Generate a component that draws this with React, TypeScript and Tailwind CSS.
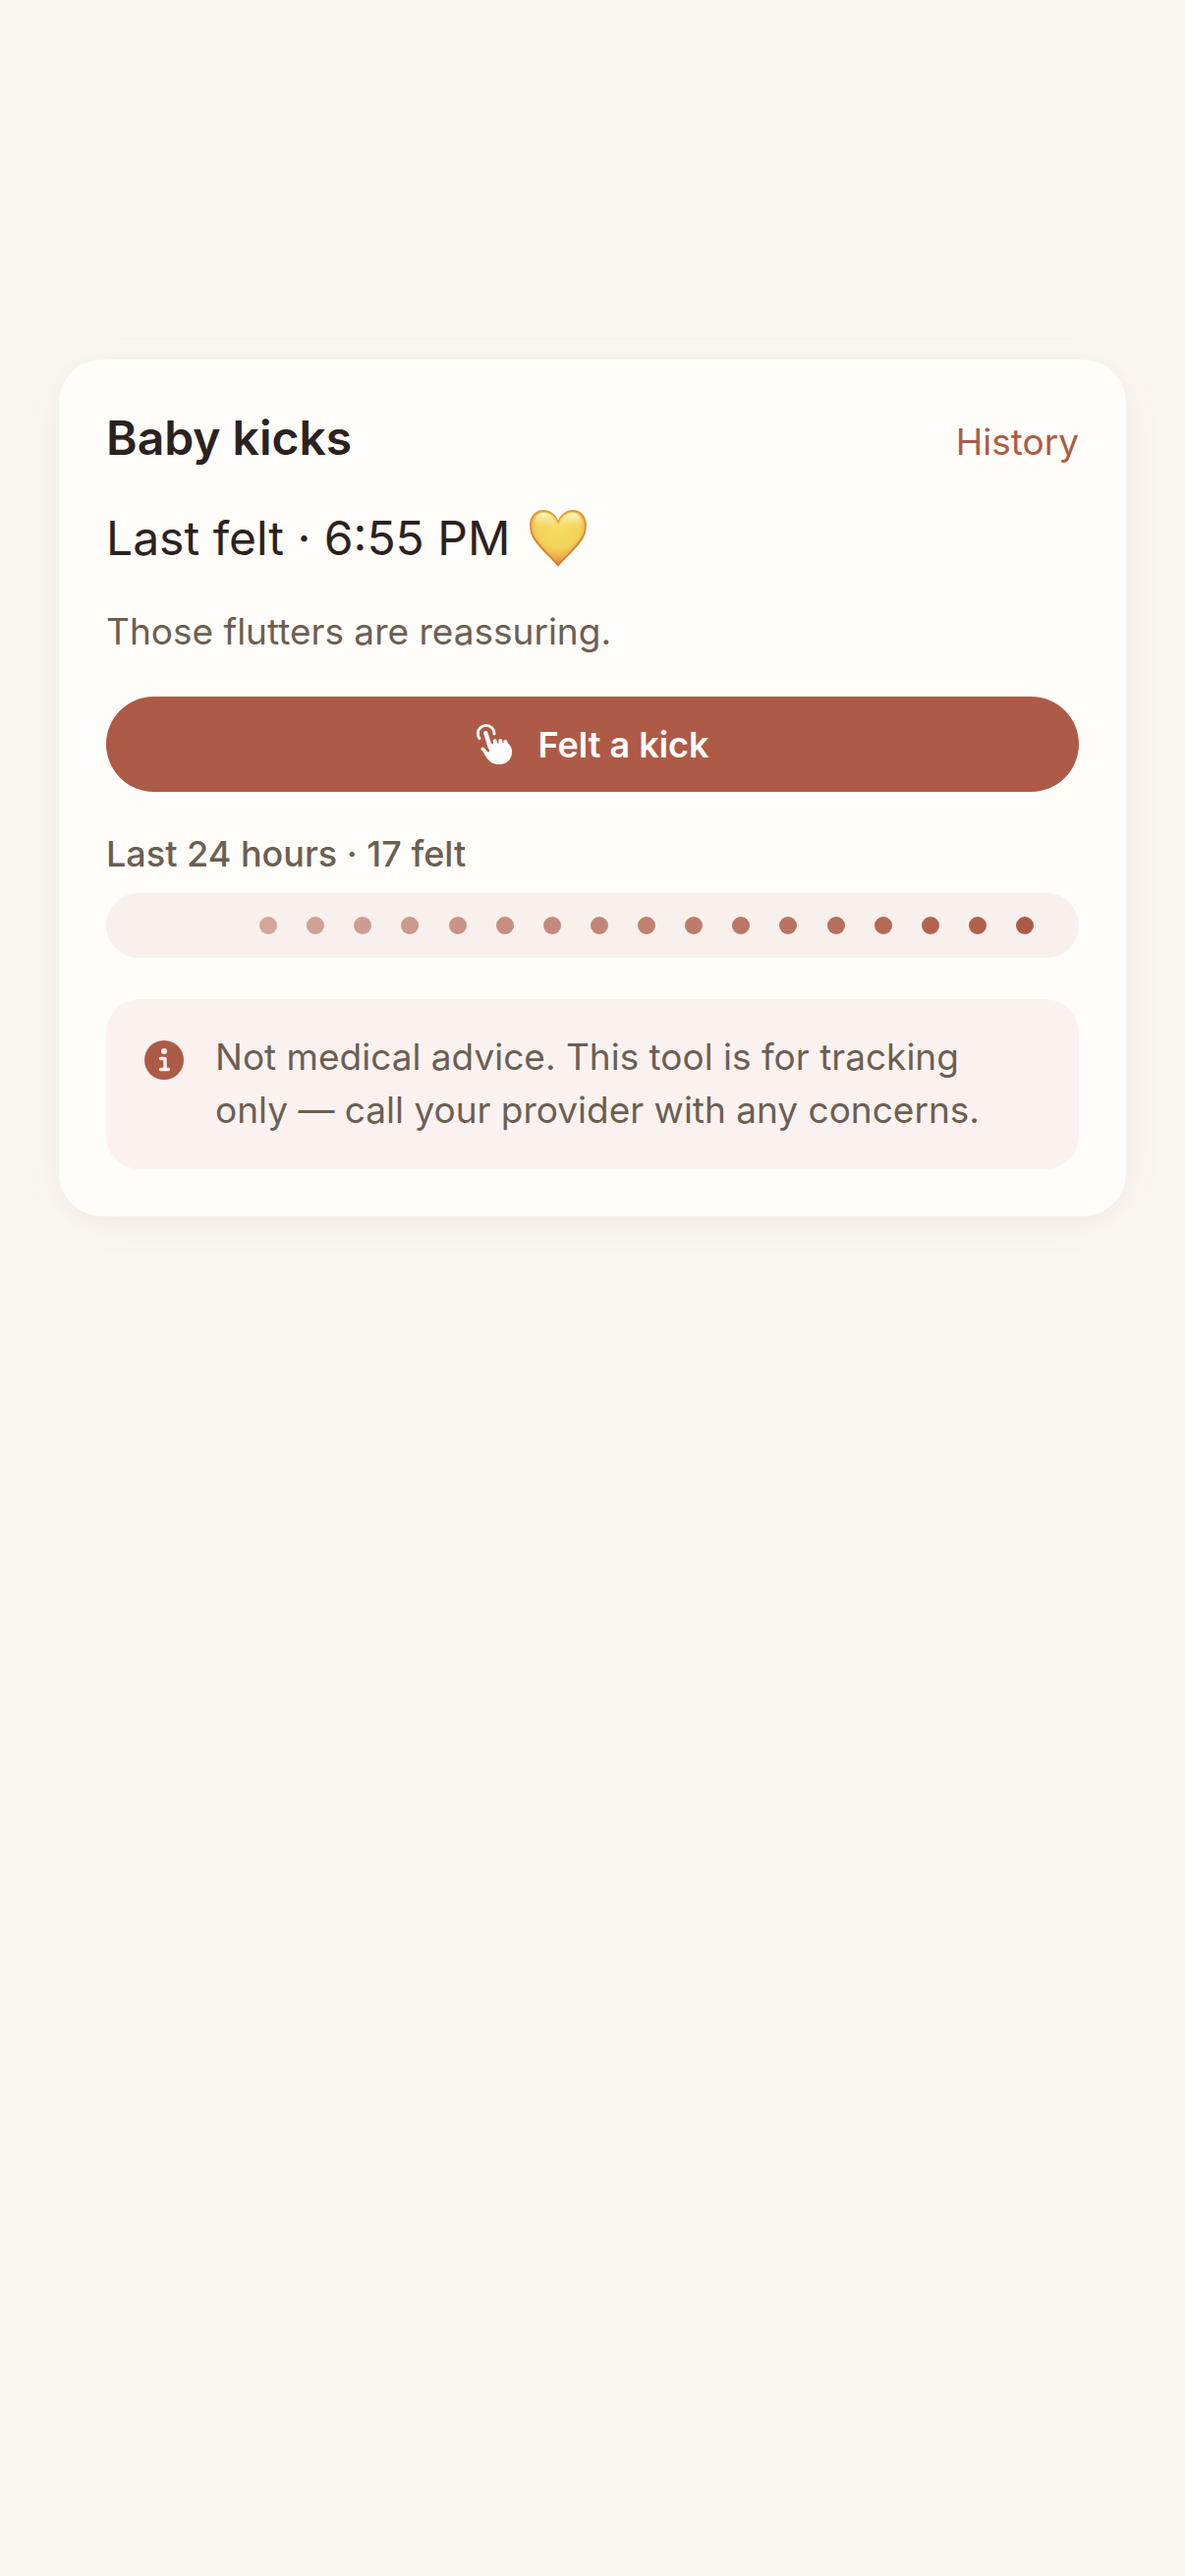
const KICK_COUNT = 17;

const kicks = Array.from({ length: KICK_COUNT }, (_, i) => ({
  id: i,
  opacity: 0.5 + (0.5 * i) / (KICK_COUNT - 1),
}));

function TapIcon() {
  return (
    <svg
      viewBox="75 105 117 135"
      className="h-[45px] w-[39px] shrink-0"
      fill="none"
      stroke="currentColor"
      strokeLinecap="round"
      strokeLinejoin="round"
      aria-hidden="true"
    >
      <path d="M87 155C83 150 82 145 82 139a25 24 0 0 1 50 0v2" strokeWidth="8.5" />
      <path d="M106 138L119 181" strokeWidth="13" />
      <path d="M97 187L116 209" strokeWidth="11" />
      <path d="M134 163L138 182M151 162L152 182M166 165L170 184" strokeWidth="12" />
      <path
        d="M112 174L126 171L172 168C183 177 187 186 186 198C185 221 169 234 147 234C129 234 117 226 108 212L100 200L118 196Z"
        fill="currentColor"
        stroke="none"
      />
    </svg>
  );
}

function YellowHeart() {
  return (
    <svg viewBox="0 0 58 58" className="size-[58px]" role="img" aria-label="Yellow heart">
      <defs>
        <linearGradient id="heart-edge" x1="0" y1="0" x2="0" y2="1">
          <stop offset="0" stopColor="#e39a3c" />
          <stop offset="1" stopColor="#d9772f" />
        </linearGradient>
        <radialGradient id="heart-fill" cx="0.5" cy="0.3" r="0.72">
          <stop offset="0" stopColor="#f5dc68" />
          <stop offset="0.55" stopColor="#f3d35a" />
          <stop offset="0.8" stopColor="#ebae48" />
          <stop offset="1" stopColor="#de8236" />
        </radialGradient>
        <linearGradient id="heart-shine" x1="0" y1="0" x2="0" y2="1">
          <stop offset="0" stopColor="#fffbe0" stopOpacity="0.9" />
          <stop offset="1" stopColor="#fbe88a" stopOpacity="0" />
        </linearGradient>
      </defs>
      <path
        d="M29 58C23 50 14 43 7 34C2 28 0 22 0 16C0 6 6 0 14 0C21 0 26 4 29 11C32 4 37 0 44 0C52 0 58 6 58 16C58 22 56 28 51 34C44 43 35 50 29 58Z"
        fill="url(#heart-edge)"
      />
      <path
        d="M29 55C23 48 15 41 9 33C4 27 2 22 2 16C2 8 7 2 14 2C21 2 26 6 29 14C32 6 37 2 44 2C51 2 56 8 56 16C56 22 54 27 49 33C43 41 35 48 29 55Z"
        fill="url(#heart-fill)"
      />
      <path
        d="M4 15C5 7 9 3 14 3C20 3 25 8 28 16C21 19 8 20 4 15ZM54 15C53 7 49 3 44 3C38 3 33 8 30 16C37 19 50 20 54 15Z"
        fill="url(#heart-shine)"
      />
    </svg>
  );
}

function InfoIcon() {
  return (
    <svg viewBox="0 0 40 40" className="mt-[10px] size-10 shrink-0" aria-hidden="true">
      <circle cx="20" cy="20" r="20" fill="#ad5b46" />
      <circle cx="20" cy="11" r="3" fill="#fbf2f0" />
      <path
        d="M16.5 18.5H21V29.5M16.5 29.5H24.5"
        fill="none"
        stroke="#fbf2f0"
        strokeWidth="3.4"
        strokeLinecap="round"
        strokeLinejoin="round"
      />
    </svg>
  );
}

export default function App() {
  return (
    <main className="min-h-screen bg-[#f9f6f1] px-[60px] pt-[366px] font-['Inter',sans-serif] text-[#2b2220]">
      <section className="flex flex-col rounded-[44px] bg-[#fffdf9] p-12 shadow-[0_6px_36px_rgba(173,91,70,0.08)]">
        <header className="flex items-baseline justify-between">
          <h1 className="text-[48px] leading-[64px] font-semibold">Baby kicks</h1>
          <a href="#history" className="text-[37px] leading-[50px] text-[#ad5b46]">
            History
          </a>
        </header>

        <p className="mt-10 flex items-center gap-5 text-[48px] leading-[60px]">
          Last felt · 6:55 PM
          <YellowHeart />
        </p>
        <p className="mt-10 text-[37px] leading-[50px] text-[#6b5f53]">Those flutters are reassuring.</p>

        <button
          type="button"
          className="mt-[41px] flex h-[97px] items-center justify-center gap-6 rounded-full bg-[#ad5b46] text-[36px] leading-[44px] font-semibold text-white"
        >
          <TapIcon />
          Felt a kick
        </button>

        <h2 className="mt-[41px] text-[36px] leading-[44px] font-medium text-[#6b5f53]">
          Last 24 hours · 17 felt
        </h2>
        <ul
          aria-label="Kicks felt in the last 24 hours"
          className="mt-[18px] flex h-[66px] items-center justify-between rounded-full bg-[#f7f0ec] pr-[46px] pl-[156px]"
        >
          {kicks.map((kick) => (
            <li
              key={kick.id}
              className="size-[18px] rounded-full bg-[#ad5b46]"
              style={{ opacity: kick.opacity }}
            />
          ))}
        </ul>

        <aside className="mt-[42px] flex gap-8 rounded-[34px] bg-[#fbf2f0] px-[39px] pt-8 pb-[33px]">
          <InfoIcon />
          <p className="text-[37px] leading-[54px] text-[#6b5f53]">
            Not medical advice. This tool is for tracking only — call your provider with any concerns.
          </p>
        </aside>
      </section>
    </main>
  );
}
